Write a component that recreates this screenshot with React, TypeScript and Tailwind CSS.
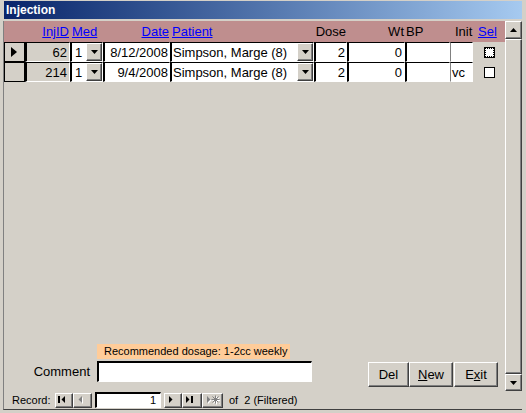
import React from "react";

const raised =
  "border border-t-white border-l-white border-b-[#404040] border-r-[#404040] shadow-[inset_-1px_-1px_0_#808080] bg-[#d4d0c8]";
const sunken =
  "border-t border-l-2 border-b border-r border-t-black border-l-black border-b-white border-r-white";

function DownArrow() {
  return (
    <svg width="7" height="4" viewBox="0 0 7 4">
      <polygon points="0,0 7,0 3.5,4" fill="#000" />
    </svg>
  );
}

function DropBtn() {
  return (
    <div className={`${raised} w-[16px] h-full flex items-center justify-center`}>
      <DownArrow />
    </div>
  );
}

function Check({ focus }: { focus?: boolean }) {
  return (
    <div className="w-[11px] h-[11px] border border-black bg-white relative">
      {focus && <div className="absolute inset-[0px] border border-dotted border-black" />}
    </div>
  );
}

type Row = { id: string; med: string; date: string; patient: string; dose: string; wt: string; init: string; cur?: boolean };

const rows: Row[] = [
  { id: "62", med: "1", date: "8/12/2008", patient: "Simpson, Marge (8)", dose: "2", wt: "0", init: "", cur: true },
  { id: "214", med: "1", date: "9/4/2008", patient: "Simpson, Marge (8)", dose: "2", wt: "0", init: "vc" },
];

function NavGlyph({ kind }: { kind: "first" | "prev" | "next" | "last" | "new" }) {
  const dis = kind === "prev" || kind === "new";
  const c = dis ? "#808080" : "#000";
  const shapes = (col: string, dx: number) => {
    switch (kind) {
      case "first":
        return (
          <g fill={col}>
            <rect x={1 + dx} y={1 + dx} width="2" height="7" />
            <polygon points={`${8 + dx},${1 + dx} ${8 + dx},${8 + dx} ${4.5 + dx},${4.5 + dx}`} />
          </g>
        );
      case "prev":
        return <polygon fill={col} points={`${6 + dx},${1 + dx} ${6 + dx},${8 + dx} ${2.5 + dx},${4.5 + dx}`} />;
      case "next":
        return <polygon fill={col} points={`${3 + dx},${1 + dx} ${3 + dx},${8 + dx} ${6.5 + dx},${4.5 + dx}`} />;
      case "last":
        return (
          <g fill={col}>
            <polygon points={`${1 + dx},${1 + dx} ${1 + dx},${8 + dx} ${4.5 + dx},${4.5 + dx}`} />
            <rect x={6 + dx} y={1 + dx} width="2" height="7" />
          </g>
        );
      case "new":
        return (
          <g fill={col} stroke={col}>
            <polygon stroke="none" points={`${1 + dx},${1 + dx} ${1 + dx},${8 + dx} ${4.5 + dx},${4.5 + dx}`} />
            <g strokeWidth="1">
              <line x1={6.5 + dx} y1={1.5 + dx} x2={12.5 + dx} y2={7.5 + dx} />
              <line x1={12.5 + dx} y1={1.5 + dx} x2={6.5 + dx} y2={7.5 + dx} />
              <line x1={9.5 + dx} y1={0.5 + dx} x2={9.5 + dx} y2={8.5 + dx} />
              <line x1={5.5 + dx} y1={4.5 + dx} x2={13.5 + dx} y2={4.5 + dx} />
            </g>
          </g>
        );
    }
  };
  return (
    <svg width="14" height="10" viewBox="0 0 14 10">
      {dis && shapes("#fff", 1)}
      {shapes(c, 0)}
    </svg>
  );
}

export default function App() {
  return (
    <div className="w-[526px] h-[413px] bg-[#d4d0c8] pt-[1px] pl-[3px] pr-[4px] pb-[3px] flex flex-col font-['Liberation_Sans',Arial,sans-serif] text-black overflow-hidden select-none">
      {/* Title bar */}
      <div className="ml-[1px] h-[19px] bg-gradient-to-r from-[#0a246a] to-[#a6caf0] flex items-center pl-[2px]">
        <span className="text-white font-bold text-[12px] leading-none">Injection</span>
      </div>
      <div className="h-[2px]" />
      {/* Form body */}
      <div className="flex-1 flex flex-col border-l border-l-[#808080] border-b border-b-[#404040]">
        <div className="flex h-[370px]">
          {/* Detail */}
          <div className="w-[501px] flex flex-col">
            {/* Header */}
            <div className="h-[21px] bg-[#bf8e8e] flex text-[13px] leading-none">
              <div className="w-[21px]" />
              <div className="w-[45px] flex items-center justify-end pr-[1px]">
                <span className="text-[#0000ff] underline">InjID</span>
              </div>
              <div className="w-[33px] flex items-center pl-[2px]">
                <span className="text-[#0000ff] underline">Med</span>
              </div>
              <div className="w-[67px] flex items-center justify-end pr-[1px]">
                <span className="text-[#0000ff] underline">Date</span>
              </div>
              <div className="w-[144px] flex items-center pl-[2px]">
                <span className="text-[#0000ff] underline">Patient</span>
              </div>
              <div className="w-[33px] flex items-center justify-end pr-[1px]">
                <span>Dose</span>
              </div>
              <div className="w-[58px] flex items-center justify-end pr-[1px]">
                <span>Wt</span>
              </div>
              <div className="w-[45px] flex items-center pl-[1px]">
                <span>BP</span>
              </div>
              <div className="w-[23px] flex items-center pl-[5px] whitespace-nowrap">
                <span>Init</span>
              </div>
              <div className="w-[32px] flex items-center pl-[5px]">
                <span className="text-[#0000ff] underline">Sel</span>
              </div>
            </div>
            {/* Rows */}
            {rows.map((r, i) => (
              <div key={i} className="h-[20px] flex text-[13px] leading-none">
                <div className="w-[21px] border border-black bg-[#d4d0c8] flex items-center justify-center">
                  {r.cur && (
                    <svg width="7" height="10" viewBox="0 0 7 10">
                      <polygon points="0,0 0,10 6,5" fill="#000" />
                    </svg>
                  )}
                </div>
                <div className={`w-[45px] ${sunken} bg-[#d4d0c8] flex items-center justify-end pr-[2px]`}>
                  {r.id}
                </div>
                <div className={`w-[33px] ${sunken} bg-white flex items-center`}>
                  <span className="flex-1 pl-[3px]">{r.med}</span>
                  <DropBtn />
                </div>
                <div className={`w-[67px] ${sunken} bg-white flex items-center justify-end pr-[1px]`}>
                  {r.date}
                </div>
                <div className={`w-[144px] ${sunken} bg-white flex items-center`}>
                  <span className="flex-1 pl-[1px] whitespace-nowrap">{r.patient}</span>
                  <DropBtn />
                </div>
                <div className={`w-[33px] ${sunken} bg-white flex items-center justify-end pr-[1px]`}>
                  {r.dose}
                </div>
                <div className={`w-[58px] ${sunken} bg-white flex items-center justify-end pr-[2px]`}>
                  {r.wt}
                </div>
                <div className={`w-[45px] ${sunken} bg-white`} />
                <div className={`w-[23px] border-t border-l border-b border-r border-t-black border-l-[#808080] border-b-white border-r-white bg-white flex items-center pl-[1px]`}>
                  {r.init}
                </div>
                <div className="w-[32px] flex items-center justify-center">
                  <Check focus={r.cur} />
                </div>
              </div>
            ))}
            <div className="flex-1" />
            {/* Footer */}
            <div className="h-[49px] flex">
              <div className="w-[93px] flex flex-col">
                <div className="h-[19px]" />
                <div className="h-[21px] flex items-center justify-end pr-[7px] text-[13px] leading-none">
                  Comment
                </div>
              </div>
              <div className="w-[215px] flex flex-col pt-[2px]">
                <div className="h-[15px] w-[193px] bg-[#ffcc99] flex items-center pl-[7px] text-[11px] leading-none whitespace-nowrap">
                  Recommended dosage: 1-2cc weekly
                </div>
                <div className="mt-[2px] h-[21px] bg-white border-t-2 border-l-2 border-b border-r border-t-black border-l-black border-b-white border-r-white" />
              </div>
              <div className="ml-[56px] pt-[20px] flex">
                <div className={`${raised} w-[41px] h-[25px] flex items-center justify-center text-[13px] leading-none`}>
                  Del
                </div>
                <div className={`${raised} w-[44px] h-[25px] flex items-center justify-center text-[13px] leading-none`}>
                  <span>
                    <span className="underline">N</span>ew
                  </span>
                </div>
                <div className={`${raised} ml-[1px] w-[44px] h-[25px] flex items-center justify-center text-[13px] leading-none`}>
                  <span>
                    E<span className="underline">x</span>it
                  </span>
                </div>
              </div>
            </div>
          </div>
          {/* Scrollbar */}
          <div className="w-[17px] flex flex-col">
            <div className={`${raised} h-[18px] flex items-center justify-center`}>
              <svg width="7" height="4" viewBox="0 0 7 4">
                <polygon points="0,4 7,4 3.5,0" fill="#000" />
              </svg>
            </div>
            <div className={`${raised} flex-1`} />
            <div className={`${raised} h-[17px] flex items-center justify-center`}>
              <DownArrow />
            </div>
          </div>
        </div>
        {/* Navigation bar */}
        <div className="h-[18px] flex items-center text-[11px] leading-none">
          <span className="w-[43px] pl-[8px] box-content">Record:</span>
          <div className="flex items-center">
            <div className={`${raised} w-[18px] h-[15px] flex items-center justify-center`}>
              <NavGlyph kind="first" />
            </div>
            <div className={`${raised} w-[19px] h-[15px] flex items-center justify-center`}>
              <NavGlyph kind="prev" />
            </div>
            <div className="ml-[3px] w-[66px] h-[16px] bg-white border-t-2 border-l-2 border-b border-r border-t-black border-l-black border-b-white border-r-white flex items-center justify-end pr-[4px]">
              1
            </div>
            <div className={`${raised} ml-[3px] w-[18px] h-[15px] flex items-center justify-center`}>
              <NavGlyph kind="next" />
            </div>
            <div className={`${raised} w-[20px] h-[15px] flex items-center justify-center`}>
              <NavGlyph kind="last" />
            </div>
            <div className={`${raised} w-[21px] h-[15px] flex items-center justify-center`}>
              <NavGlyph kind="new" />
            </div>
            <span className="ml-[6px] whitespace-pre">of  2 (Filtered)</span>
          </div>
        </div>
      </div>
    </div>
  );
}
